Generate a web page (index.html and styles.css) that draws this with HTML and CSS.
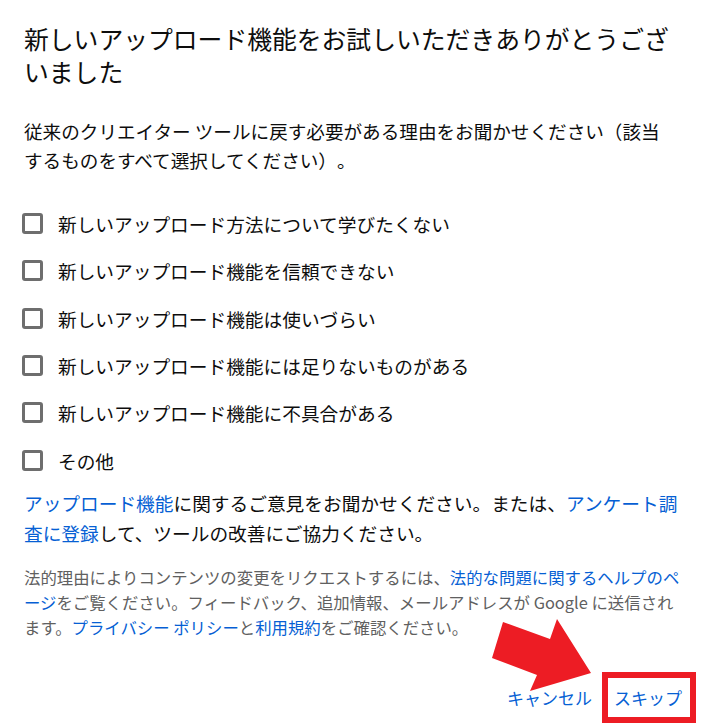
FILE: index.html
```html
<!DOCTYPE html>
<html lang="ja">
<head>
<meta charset="UTF-8" />
<title>フィードバック</title>
<link rel="stylesheet" href="styles.css">
</head>
<body>
  <div class="dialog">
    <h1 class="title">新しいアップロード機能をお試しいただきありがとうございました</h1>

    <p class="intro">従来のクリエイター ツールに戻す必要がある理由をお聞かせください（該当するものをすべて選択してください）。</p>

    <ul class="reasons">
      <li><span class="box"></span>新しいアップロード方法について学びたくない</li>
      <li><span class="box"></span>新しいアップロード機能を信頼できない</li>
      <li><span class="box"></span>新しいアップロード機能は使いづらい</li>
      <li><span class="box"></span>新しいアップロード機能には足りないものがある</li>
      <li><span class="box"></span>新しいアップロード機能に不具合がある</li>
      <li><span class="box"></span>その他</li>
    </ul>

    <p class="feedback"><a href="#">アップロード機能</a>に関するご意見をお聞かせください。または、<a href="#">アンケート調査に登録</a>して、ツールの改善にご協力ください。</p>

    <p class="legal">法的理由によりコンテンツの変更をリクエストするには、<a href="#">法的な問題に関するヘルプのページ</a>をご覧ください。フィードバック、追加情報、メールアドレスが Google に送信されます。<a href="#">プライバシー ポリシー</a>と<a href="#">利用規約</a>をご確認ください。</p>

    <div class="actions">
      <button class="btn">キャンセル</button>
      <button class="btn btn-skip">スキップ</button>
    </div>

    <!-- annotation arrow -->
    <svg class="arrow" width="110" height="80" viewBox="488 616 110 80" aria-hidden="true">
      <polygon points="503,622 550,639 557,619 591,673 530,691 537,675 492,658" fill="#ed1c24" />
    </svg>
  </div>
</body>
</html>
```

FILE: styles.css
```css
/* Base */
*, *::before, *::after {
  box-sizing: border-box;
}
html, body {
  margin: 0;
  background: #fff;
  color: #0d0d0d;
  font-family: "Noto Sans CJK JP", "Noto Sans", sans-serif;
  text-spacing-trim: space-all;
}

.dialog {
  position: relative;
  width: 707px;
  padding: 22px 24px 0 24px;
}

.title {
  margin: 0;
  font-size: 24.8px;
  line-height: 33px;
  font-weight: 400;
}

.intro {
  max-width: 650px;
  margin: 28px 0 0 0;
  font-size: 18.6px;
  line-height: 29px;
}

.reasons {
  list-style: none;
  margin: 26px 0 0 0;
  padding: 0;
}
.reasons li {
  display: flex;
  align-items: center;
  height: 47.3px;
  font-size: 18.7px;
}
.box {
  flex: none;
  width: 21px;
  height: 21px;
  margin: 0 15px 0 -2px;
  border: 3px solid #6e6e6e;
  border-radius: 3px;
}

a {
  color: #065fd4;
  text-decoration: none;
}

.feedback {
  margin: 4px 0 0 0;
  font-size: 18.7px;
  line-height: 30px;
}

.legal {
  margin: 17px 0 0 0;
  font-size: 16.4px;
  line-height: 25px;
  color: #606060;
}

.actions {
  display: flex;
  justify-content: flex-end;
  align-items: center;
  gap: 8px;
  margin: 32px -13px 0 0;
}
.btn {
  font-family: inherit;
  font-size: 17px;
  color: #065fd4;
  background: none;
  border: none;
  padding: 0 2px;
  cursor: pointer;
}
.btn-skip {
  height: 51px;
  padding: 0 8px 0 6px;
  border: 6px solid #ed1c24;
}

.arrow {
  position: absolute;
  left: 488px;
  top: 616px;
}
```
